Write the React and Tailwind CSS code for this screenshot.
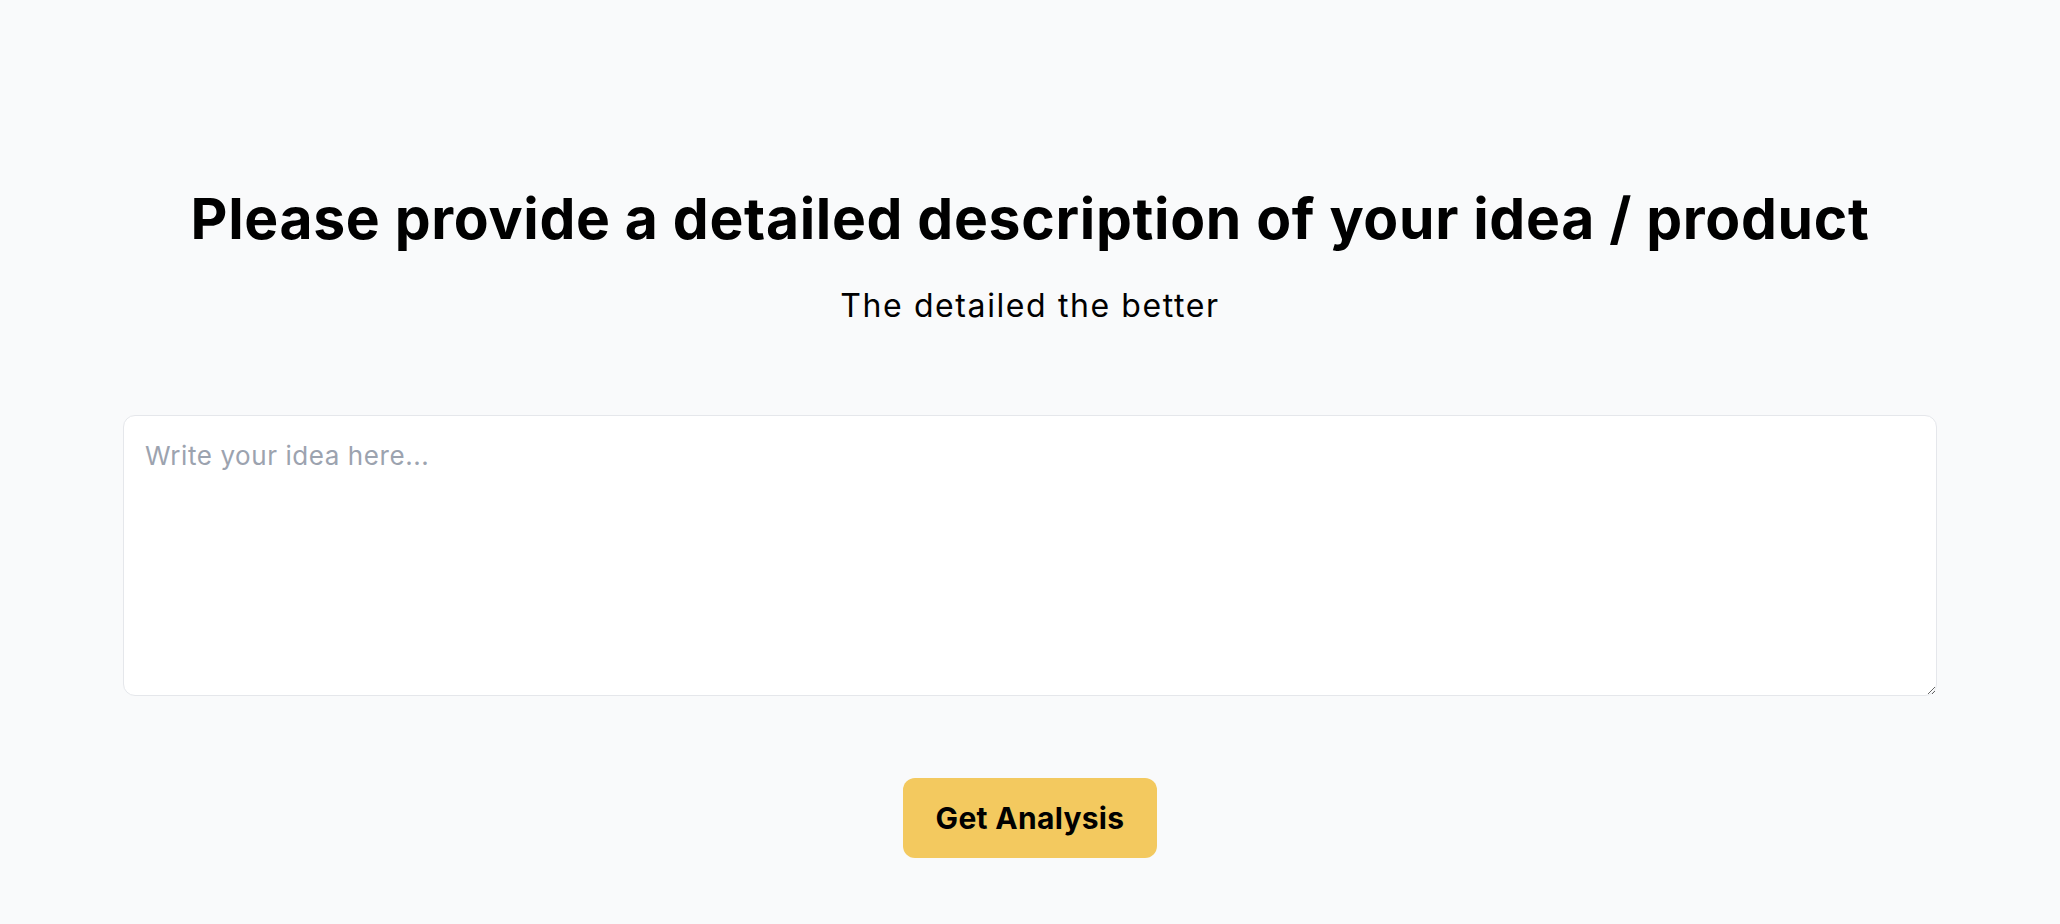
import React from 'react'

export default function App() {
    return (
        <div className="min-h-[924px] w-full bg-[#f9fafb] text-black font-['Inter',sans-serif]">
            <main className="flex flex-col items-center px-[123px] pt-[190px] pb-[65px]">
                {/* ===== Heading ===== */}
                <h1 className="text-[57px] leading-none font-bold tracking-[0.012em] text-center">
                    Please provide a detailed description of your idea / product
                </h1>
                <p className="mt-[43px] text-[32px] leading-none tracking-[0.05em] text-center">
                    The detailed the better
                </p>

                {/* ===== Idea input ===== */}
                <textarea
                    placeholder="Write your idea here..."
                    className="mt-[93px] w-full h-[281px] bg-white border border-[#e5e7eb] rounded-[12px] px-[21px] py-[20px] text-[26px] leading-normal tracking-[0.022em] placeholder:text-[#9ca3af] outline-none resize-y"
                />

                <button className="mt-[82px] h-[80px] px-[33px] rounded-[12px] bg-[#f3c95f] text-[30px] font-bold tracking-[0.01em]">
                    Get Analysis
                </button>
            </main>
        </div>
    )
}
